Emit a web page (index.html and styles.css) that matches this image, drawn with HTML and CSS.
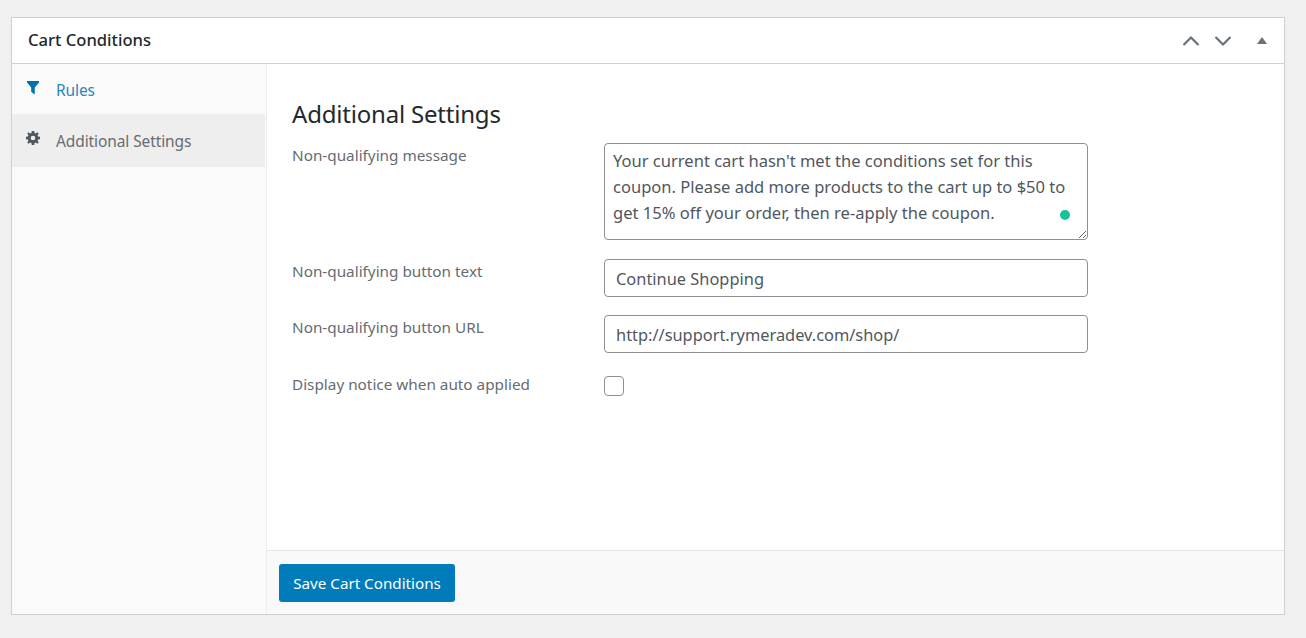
FILE: index.html
```html
<!DOCTYPE html>
<html lang="en">
<head>
<meta charset="utf-8">
<title>Cart Conditions</title>
<link rel="stylesheet" href="styles.css">
</head>
<body>
<section class="panel">
  <header class="panel-head">
    <h2 class="panel-title">Cart Conditions</h2>
    <div class="panel-actions">
      <svg class="chev" width="18" height="12" viewBox="0 0 18 12"><path d="M1.500 10 9 2.500 16.500 10" fill="none" stroke="#6b7178" stroke-width="2.200"/></svg>
      <svg class="chev" width="18" height="12" viewBox="0 0 18 12"><path d="M1.500 2 9 9.500 16.500 2" fill="none" stroke="#6b7178" stroke-width="2.200"/></svg>
      <svg class="tri" width="10" height="7" viewBox="0 0 10 7"><path d="M5 0 10 7H0Z" fill="#6b7178"/></svg>
    </div>
  </header>
  <div class="panel-body">
    <nav class="side">
      <a class="tab tab-link" href="#">
        <svg class="tab-icon" width="12" height="14" viewBox="0 0 12 14"><path d="M0 0H12V1.500L7.800 6.500V13.500L4.200 11V6.500L0 1.500Z" fill="#0073aa"/></svg>
        <span>Rules</span>
      </a>
      <a class="tab tab-active" href="#">
        <svg class="tab-icon" width="14" height="14" viewBox="0 0 14 14"><path fill-rule="evenodd" d="M5.800 0H8.200L8.600 1.900 9.800 2.400 11.400 1.300 12.700 2.600 11.600 4.200 12.100 5.400 14 5.800V8.200L12.100 8.600 11.600 9.800 12.700 11.400 11.400 12.700 9.800 11.600 8.600 12.100 8.200 14H5.800L5.400 12.100 4.200 11.600 2.600 12.700 1.300 11.400 2.400 9.800 1.900 8.600 0 8.200V5.800L1.900 5.400 2.400 4.200 1.300 2.600 2.600 1.300 4.200 2.400 5.400 1.900ZM7 4.700A2.300 2.300 0 1 0 7 9.300 2.300 2.300 0 1 0 7 4.700Z" fill="#50575e"/></svg>
        <span>Additional Settings</span>
      </a>
    </nav>
    <div class="main">
      <div class="content">
        <h3 class="section-title">Additional Settings</h3>
        <div class="form">
          <label class="field-label" for="msg">Non-qualifying message</label>
          <div class="field-wrap">
            <textarea class="field area" id="msg" spellcheck="false">Your current cart hasn't met the conditions set for this coupon. Please add more products to the cart up to $50 to get 15% off your order, then re-apply the coupon.</textarea>
            <span class="dot"></span>
          </div>
          <label class="field-label" for="btn-text">Non-qualifying button text</label>
          <input class="field line" id="btn-text" type="text" value="Continue Shopping">
          <label class="field-label" for="btn-url">Non-qualifying button URL</label>
          <input class="field line" id="btn-url" type="text" value="http://support.rymeradev.com/shop/">
          <label class="field-label field-label-check" for="auto">Display notice when auto applied</label>
          <input class="check" id="auto" type="checkbox">
        </div>
      </div>
      <footer class="foot">
        <button class="save" type="button">Save Cart Conditions</button>
      </footer>
    </div>
  </div>
</section>
</body>
</html>
```
FILE: styles.css
```css
* { box-sizing: border-box; }
html, body { height: 100%; }
body {
  margin: 0;
  padding: 17px 21px 23px 11px;
  background: #f0f0f1;
  font-family: "Noto Sans", "Open Sans", sans-serif;
  color: #50575e;
  overflow: hidden;
}
.panel {
  display: flex;
  flex-direction: column;
  height: 598px;
  background: #fff;
  border: 1px solid #ccd0d4;
}
.panel-head {
  display: flex;
  align-items: center;
  justify-content: space-between;
  height: 46px;
  padding: 0 17px 2px 16px;
  border-bottom: 1px solid #ccd0d4;
  flex: none;
}
.panel-title {
  margin: 0;
  font-size: 16.600px;
  font-weight: 500;
  color: #23282d;
}
.panel-actions { display: flex; align-items: center; gap: 14px; padding-top: 2px; }
.tri { margin-left: 11px; }
.panel-body { display: flex; flex: 1; min-height: 0; }
.side {
  flex: none;
  width: 255px;
  display: flex;
  flex-direction: column;
  background: #fafafa;
  border-right: 1px solid #eee;
  padding-right: 1px;
}
.tab {
  display: flex;
  align-items: flex-start;
  height: 50px;
  padding: 16px 0 0 14px;
  text-decoration: none;
  font-size: 15.500px;
  line-height: 20px;
  letter-spacing: -0.1px;
}
.tab-icon { flex: none; margin-top: 1px; }
.tab-link { color: #2b87b7; }
.tab-link .tab-icon { margin-right: 17px; margin-left: 1px; }
.tab-active {
  height: 53px;
  padding-top: 17px;
  background: #eee;
  color: #666c72;
}
.tab-active .tab-icon { margin: 0 16px 0 0; }
.main { flex: 1; display: flex; flex-direction: column; min-width: 0; }
.content { flex: 1; padding: 32px 25px 0; }
.section-title {
  margin: 0 0 11px;
  font-size: 24px;
  font-weight: 400;
  line-height: 36px;
  color: #23282d;
  letter-spacing: -0.2px;
}
.form {
  display: grid;
  grid-template-columns: 312px 484px;
  row-gap: 18px;
  align-items: start;
}
.field-label {
  font-size: 15.300px;
  line-height: 20px;
  color: #666c72;
  padding-top: 2px;
}
.field-label-check { padding-top: 3px; }
.field-wrap { position: relative; height: 98px; }
.field {
  display: block;
  width: 484px;
  background: #fff;
  border: 1px solid #8c8f94;
  border-radius: 4px;
  font-family: inherit;
  color: #50575e;
  outline: 0;
}
.area {
  height: 97px;
  padding: 4px 8px;
  font-size: 16.550px;
  line-height: 26px;
  resize: both;
  overflow: hidden;
}
.dot {
  position: absolute;
  right: 18px;
  bottom: 21px;
  width: 10px;
  height: 10px;
  border-radius: 50%;
  background: #15c39a;
}
.line {
  height: 38px;
  padding: 0 11px;
  font-size: 16.400px;
}
.check {
  appearance: none;
  margin: 5px 0 0;
  width: 20px;
  height: 20px;
  background: #fff;
  border: 1px solid #8c8f94;
  border-radius: 4px;
}
.foot {
  flex: none;
  height: 64px;
  padding: 13px 12px;
  background: #f9f9f9;
  border-top: 1px solid #e5e5e5;
}
.save {
  display: block;
  width: 176px;
  height: 38px;
  padding: 0;
  background: #007cba;
  border: 0;
  border-radius: 3px;
  color: #fff;
  font-family: inherit;
  font-size: 15.200px;
}
```
